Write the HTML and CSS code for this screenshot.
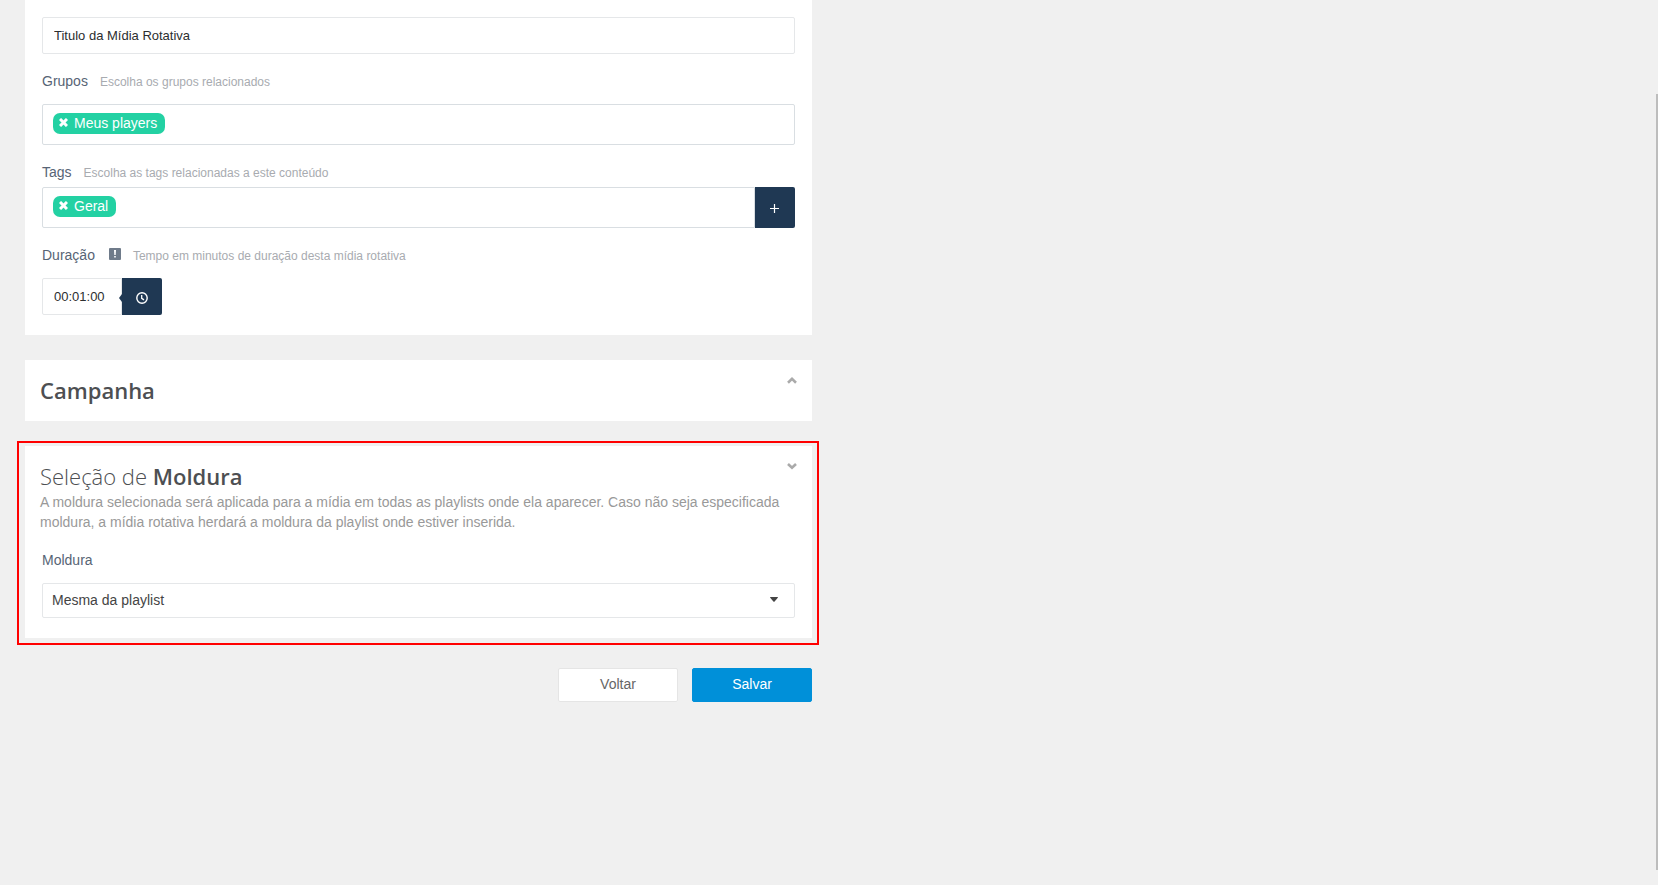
FILE: index.html
```html
<!DOCTYPE html>
<html lang="pt-BR">
<head>
<meta charset="utf-8">
<title>Mídia Rotativa</title>
<link rel="stylesheet" href="styles.css">
</head>
<body>
<form class="page">
  <section class="card card-main">
    <input class="input" type="text" value="Titulo da Mídia Rotativa" aria-label="Título">

    <div class="field">
      <div class="field-head"><span class="label" id="grupos">Grupos</span><span class="help">Escolha os grupos relacionados</span></div>
      <div class="group">
        <div class="tagbox" role="group" aria-labelledby="grupos">
          <span class="tag"><button class="tag-remove" type="button" aria-label="Remover"><svg viewBox="0 0 9 9" width="9" height="9"><path d="M1 1 8 8M8 1 1 8" stroke="currentColor" stroke-width="3"/></svg></button>Meus players</span>
        </div>
      </div>
    </div>

    <div class="field field-tight">
      <div class="field-head"><span class="label" id="tags">Tags</span><span class="help">Escolha as tags relacionadas a este conteúdo</span></div>
      <div class="group">
        <div class="tagbox tagbox-joined" role="group" aria-labelledby="tags">
          <span class="tag"><button class="tag-remove" type="button" aria-label="Remover"><svg viewBox="0 0 9 9" width="9" height="9"><path d="M1 1 8 8M8 1 1 8" stroke="currentColor" stroke-width="3"/></svg></button>Geral</span>
        </div>
        <button class="addon" type="button" aria-label="Adicionar tag"><svg viewBox="0 0 10 10" width="10" height="10"><path d="M0 4.500H9M4.500 0V9" stroke="currentColor" stroke-width="1.200"/></svg></button>
      </div>
    </div>

    <div class="field">
      <div class="field-head">
        <label class="label" for="duracao">Duração</label>
        <svg class="info" viewBox="0 0 12 12" width="12" height="12"><rect width="12" height="12" rx="1" fill="#6f7b8a"/><path d="M5 2H7L6.700 7H5.300ZM5.200 8H6.800V9.600H5.200Z" fill="#fff"/></svg>
        <span class="help">Tempo em minutos de duração desta mídia rotativa</span>
      </div>
      <div class="group">
        <input class="input input-time" id="duracao" type="text" value="00:01:00">
        <button class="addon addon-time" type="button" aria-label="Escolher duração"><svg viewBox="0 0 12 12" width="12" height="12" fill="none" stroke="currentColor"><circle cx="6" cy="6" r="5.200" stroke-width="1.400"/><path d="M5.700 3V6.300L8 7.900" stroke-width="1.300"/></svg></button>
      </div>
    </div>
  </section>

  <section class="card">
    <div class="card-head">
      <h2 class="title"><strong>Campanha</strong></h2>
      <button class="toggle" type="button" aria-label="Abrir"><svg viewBox="0 0 10 7" width="10" height="7"><path d="M1 5.700 5 1.900 9 5.700" fill="none" stroke="currentColor" stroke-width="2.600"/></svg></button>
    </div>
  </section>

  <section class="card card-frame">
    <div class="card-head">
      <h2 class="title">Seleção de <strong>Moldura</strong></h2>
      <button class="toggle" type="button" aria-label="Fechar"><svg viewBox="0 0 10 7" width="10" height="7"><path d="M1 1 5 4.800 9 1" fill="none" stroke="currentColor" stroke-width="2.600"/></svg></button>
    </div>
    <p class="description">A moldura selecionada será aplicada para a mídia em todas as playlists onde ela aparecer. Caso não seja especificada moldura, a mídia rotativa herdará a moldura da playlist onde estiver inserida.</p>
    <div class="field field-body">
      <div class="field-head"><label class="label" for="moldura">Moldura</label></div>
      <div class="select-wrap">
        <select class="select" id="moldura"><option>Mesma da playlist</option></select>
        <svg class="caret" viewBox="0 0 8 5" width="8" height="5"><path d="M0 .4Q0 0 .4 0H7.600Q8 0 8 .4L4.600 4.500Q4 5 3.400 4.500Z" fill="#444"/></svg>
      </div>
    </div>
  </section>

  <div class="actions">
    <button class="btn" type="button">Voltar</button>
    <button class="btn btn-primary" type="submit">Salvar</button>
  </div>
</form>
<div class="scroll-thumb"></div>
</body>
</html>
```
FILE: styles.css
```css
* { box-sizing: border-box; }

body {
  margin: 0;
  background: #f0f0f0;
  color: #576475;
  font: 14px/20px "Liberation Sans", Arial, sans-serif;
}

button, input, select { font: inherit; }
button { padding: 0; border: 0; cursor: pointer; }
svg { display: block; }

.page {
  width: 50%;
  padding: 0 17px 0 25px;
}

.card {
  position: relative;
  margin-bottom: 25px;
  background: #fff;
}

.card-main { padding: 17px 17px 20px; }

.input {
  display: block;
  width: 100%;
  height: 37px;
  padding: 0 11px;
  border: 1px solid #e5e7e9;
  border-radius: 2px;
  background: #fff;
  color: #2c2e2f;
  font-size: 13px;
}

.input-time {
  width: 80px;
  border-radius: 2px 0 0 2px;
}

.field {
  display: flex;
  flex-direction: column;
  gap: 13px;
  margin-top: 17px;
}

.field-tight { gap: 5px; }
.field-body { margin-top: 18px; padding: 0 17px 20px; }

.field-head {
  display: flex;
  align-items: baseline;
  gap: 12px;
}

.help { color: #a8abb0; font-size: 12px; line-height: 16px; }
.info { margin-left: 2px; }

.group { display: flex; }

.tagbox {
  display: flex;
  align-items: flex-start;
  flex: 1;
  height: 41px;
  padding: 8px 10px;
  border: 1px solid #d9dee2;
  border-radius: 2px;
}

.tagbox-joined { border-radius: 2px 0 0 2px; }

.tag {
  display: flex;
  align-items: center;
  gap: 6px;
  height: 21px;
  padding: 0 8px 2px 6px;
  border-radius: 7px;
  background: #23d1a3;
  color: #fff;
}

.tag-remove { background: none; color: #fff; }

.addon {
  position: relative;
  display: grid;
  place-items: center;
  width: 40px;
  padding-top: 2px;
  border-radius: 0 2px 2px 0;
  background: #1f3853;
  color: #fff;
}

.addon-time::before {
  content: "";
  position: absolute;
  right: 100%;
  top: 16px;
  border: 4px solid transparent;
  border-left: 0;
  border-right: 3px solid #1f3853;
}

.card-head {
  display: flex;
  justify-content: space-between;
  align-items: flex-start;
  padding: 16px 15px;
}

.title {
  margin: 0;
  color: #4d4f52;
  font: 300 22px/29px "Open Sans", sans-serif;
}

.title strong { font-weight: 600; }
.toggle { padding: 1px 0; background: none; color: #aaa; }

.card-frame .card-head { padding-bottom: 0; }

.card-frame::after {
  content: "";
  position: absolute;
  inset: -5px -7px -7px -8px;
  border: 2px solid #f00;
  pointer-events: none;
}

.description {
  margin: 1px 0 0;
  padding: 0 15px;
  color: #999;
}

.select-wrap { position: relative; }

.select {
  display: block;
  width: 100%;
  height: 35px;
  padding: 0 9px 2px;
  border: 1px solid #e5e7e9;
  border-radius: 2px;
  background: #fff;
  color: #444;
  appearance: none;
}

.caret {
  position: absolute;
  top: 14px;
  right: 17px;
  pointer-events: none;
}

.actions {
  display: flex;
  justify-content: flex-end;
  gap: 14px;
  margin-top: 30px;
}

.btn {
  width: 120px;
  height: 34px;
  padding-bottom: 2px;
  border: 1px solid #e5e5e5;
  border-radius: 2px;
  background: #fff;
  color: #666;
}

.btn-primary {
  border-color: #0090d9;
  background: #0090d9;
  color: #fff;
}

.scroll-thumb {
  position: fixed;
  top: 94px;
  right: 0;
  bottom: 15px;
  width: 2px;
  background: #bdbdbd;
}
```
